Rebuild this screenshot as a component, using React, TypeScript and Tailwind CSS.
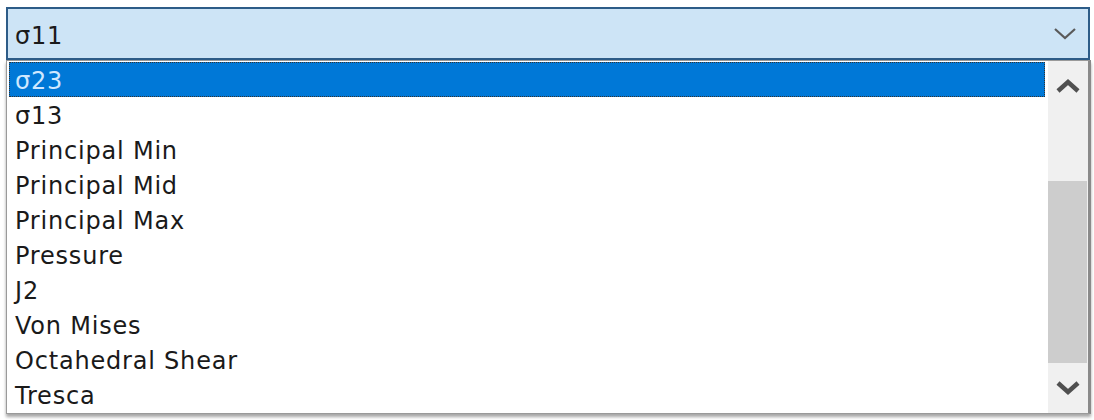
const ITEMS = [
  'σ23',
  'σ13',
  'Principal Min',
  'Principal Mid',
  'Principal Max',
  'Pressure',
  'J2',
  'Von Mises',
  'Octahedral Shear',
  'Tresca',
]

function Chevron({ up, thin }: { up?: boolean; thin?: boolean }) {
  return (
    <svg width="26" height="16" viewBox="0 0 26 16">
      <path
        d={up ? 'M3 13 L13 4 L23 13' : 'M3 3 L13 12 L23 3'}
        fill="none"
        stroke={thin ? '#5a5a5a' : '#505050'}
        strokeWidth={thin ? 2.2 : 4.5}
      />
    </svg>
  )
}

export default function App() {
  return (
    <main
      className="w-[1094px] h-[420px] bg-white pt-[7px] pl-[6px] text-[24px] text-[#1a1a1a] tracking-[0.8px]"
      style={{ fontFamily: '"DejaVu Sans", "Noto Sans", sans-serif' }}
    >
      <div className="w-[1084px] h-[53px] border-2 border-[#2d5c88] bg-[#cde4f6] flex items-center justify-between pl-[7px] pr-[10px]">
        <span className="pt-[5px]">σ11</span>
        <Chevron thin />
      </div>
      <div className="w-[1085px] h-[354px] border border-[#9a9a9a] border-r-[3px] border-r-[#8a8a8a] shadow-[0_3px_3px_rgba(0,0,0,0.35)] flex">
        <ul className="flex-1 pt-[1px] pl-[2px] pr-[3px]">
          {ITEMS.map((item, i) => (
            <li
              key={item}
              className={
                i === 0
                  ? 'h-[35px] flex items-center pl-[5px] pt-[2px] bg-[#0078d7] text-[#cfe8ff] border border-dotted border-[#333]'
                  : 'h-[35px] flex items-center pl-[6px] pt-[3px]'
              }
            >
              {item}
            </li>
          ))}
        </ul>
        <div className="w-[40px] bg-[#f0f0f0] flex flex-col">
          <div className="h-[50px] flex items-center justify-center">
            <Chevron up />
          </div>
          <div className="h-[70px]" />
          <div className="h-[182px] bg-[#cdcdcd] mr-[1px]" />
          <div className="flex-1 flex items-center justify-center">
            <Chevron />
          </div>
        </div>
      </div>
    </main>
  )
}
